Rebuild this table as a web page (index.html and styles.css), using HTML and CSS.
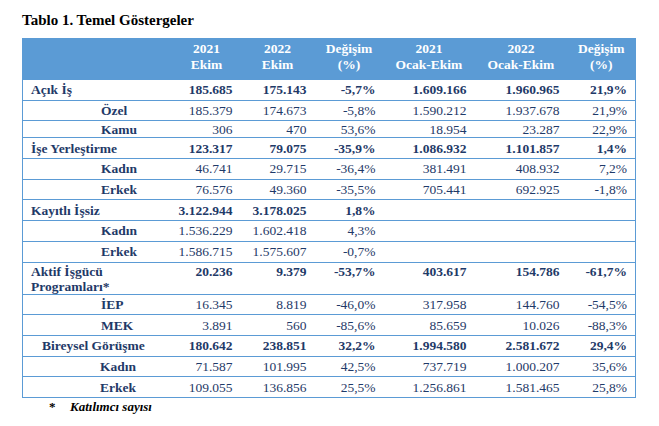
FILE: index.html
```html
<!DOCTYPE html>
<html lang="tr">
<head>
<meta charset="utf-8">
<title>Tablo 1. Temel Göstergeler</title>
<link rel="stylesheet" href="styles.css">
</head>
<body>
<h1 class="title">Tablo 1. Temel Göstergeler</h1>
<table class="data">
  <colgroup>
    <col class="c-label"><col class="c1"><col class="c2"><col class="c3"><col class="c4"><col class="c5"><col class="c6">
  </colgroup>
  <thead>
    <tr class="head">
      <th></th>
      <th>2021<br>Ekim</th>
      <th>2022<br>Ekim</th>
      <th>Değişim<br>(%)</th>
      <th>2021<br>Ocak-Ekim</th>
      <th>2022<br>Ocak-Ekim</th>
      <th>Değişim<br>(%)</th>
    </tr>
  </thead>
  <tbody>
    <tr class="main"><td class="lbl">Açık İş</td><td>185.685</td><td>175.143</td><td>-5,7%</td><td>1.609.166</td><td>1.960.965</td><td>21,9%</td></tr>
    <tr><td class="lbl sub">Özel</td><td>185.379</td><td>174.673</td><td>-5,8%</td><td>1.590.212</td><td>1.937.678</td><td>21,9%</td></tr>
    <tr class="short"><td class="lbl sub">Kamu</td><td>306</td><td>470</td><td>53,6%</td><td>18.954</td><td>23.287</td><td>22,9%</td></tr>
    <tr class="main"><td class="lbl">İşe Yerleştirme</td><td>123.317</td><td>79.075</td><td>-35,9%</td><td>1.086.932</td><td>1.101.857</td><td>1,4%</td></tr>
    <tr><td class="lbl sub">Kadın</td><td>46.741</td><td>29.715</td><td>-36,4%</td><td>381.491</td><td>408.932</td><td>7,2%</td></tr>
    <tr><td class="lbl sub">Erkek</td><td>76.576</td><td>49.360</td><td>-35,5%</td><td>705.441</td><td>692.925</td><td>-1,8%</td></tr>
    <tr class="main"><td class="lbl">Kayıtlı İşsiz</td><td>3.122.944</td><td>3.178.025</td><td>1,8%</td><td></td><td></td><td></td></tr>
    <tr><td class="lbl sub">Kadın</td><td>1.536.229</td><td>1.602.418</td><td>4,3%</td><td></td><td></td><td></td></tr>
    <tr><td class="lbl sub">Erkek</td><td>1.586.715</td><td>1.575.607</td><td>-0,7%</td><td></td><td></td><td></td></tr>
    <tr class="main tall"><td class="lbl">Aktif İşgücü Programları*</td><td>20.236</td><td>9.379</td><td>-53,7%</td><td>403.617</td><td>154.786</td><td>-61,7%</td></tr>
    <tr><td class="lbl sub">İEP</td><td>16.345</td><td>8.819</td><td>-46,0%</td><td>317.958</td><td>144.760</td><td>-54,5%</td></tr>
    <tr><td class="lbl sub">MEK</td><td>3.891</td><td>560</td><td>-85,6%</td><td>85.659</td><td>10.026</td><td>-88,3%</td></tr>
    <tr class="main"><td class="lbl mid">Bireysel Görüşme</td><td>180.642</td><td>238.851</td><td>32,2%</td><td>1.994.580</td><td>2.581.672</td><td>29,4%</td></tr>
    <tr><td class="lbl sub2">Kadın</td><td>71.587</td><td>101.995</td><td>42,5%</td><td>737.719</td><td>1.000.207</td><td>35,6%</td></tr>
    <tr><td class="lbl sub2">Erkek</td><td>109.055</td><td>136.856</td><td>25,5%</td><td>1.256.861</td><td>1.581.465</td><td>25,8%</td></tr>
  </tbody>
</table>
<p class="note"><span class="star">*</span><span class="note-text">Katılımcı sayısı</span></p>
</body>
</html>
```

FILE: styles.css
```css
html, body {
  margin: 0;
  padding: 0;
  background: #ffffff;
}
body {
  padding: 0 22px;
  font-family: "Liberation Serif", "Times New Roman", serif;
  color: #1f3a68;
}
.title {
  margin: 11px 0 9px;
  font-size: 15px;
  line-height: 18px;
  font-weight: bold;
  color: #000000;
}
.data {
  border-collapse: collapse;
  table-layout: fixed;
  width: 613px;
  border: 1px solid #5b9bd5;
  font-size: 13.5px;
}
.c-label { width: 150px; }
.c1 { width: 68px; }
.c2 { width: 74px; }
.c3 { width: 69px; }
.c4 { width: 91px; }
.c5 { width: 93px; }
.c6 { width: 68px; }

.head th {
  background: #5b9bd5;
  color: #ffffff;
  font-weight: bold;
  line-height: 16px;
  height: 41px;
  padding: 2px 0 0;
  vertical-align: top;
  text-align: center;
  box-sizing: border-box;
}
.data td {
  height: 20.7px;
  padding: 0 8px 0 0;
  text-align: right;
  vertical-align: middle;
  border-top: 1px solid #5b9bd5;
  line-height: 15px;
  white-space: nowrap;
  box-sizing: border-box;
}
.data tr.short td { height: 17px; }
.data tr.tall td {
  height: 32px;
  vertical-align: top;
  padding-top: 1px;
}
.data tr.main td { font-weight: bold; }
.data td.lbl {
  text-align: left;
  font-weight: bold;
  padding-left: 8px;
  white-space: normal;
}
.data td.sub { padding-left: 78px; }
.data td.sub2 { padding-left: 77px; }
.data td.mid { padding-left: 19px; }

.note {
  margin: 1px 0 0;
  font-size: 13px;
  line-height: 16px;
  color: #000000;
  display: flex;
}
.star {
  width: 48px;
  padding-left: 27px;
  box-sizing: border-box;
  font-weight: bold;
}
.note-text {
  font-weight: bold;
  font-style: italic;
}
```
